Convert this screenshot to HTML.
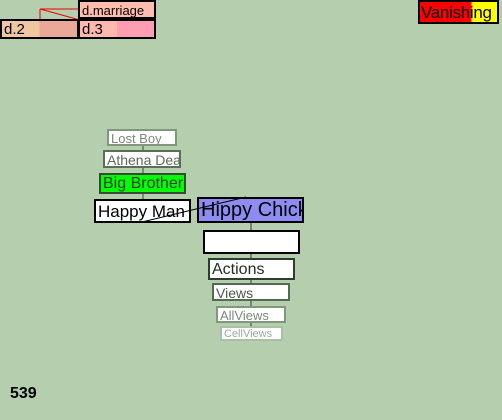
<!DOCTYPE html>
<html><head><style>
body{margin:0;width:502px;height:420px;background:#b5ceae;position:relative;overflow:hidden;font-family:"Liberation Sans",sans-serif;}
.b{position:absolute;box-sizing:border-box;background:#fff;white-space:nowrap;overflow:hidden;line-height:1;padding-left:2px;}
</style></head><body>
<svg width="502" height="420" style="position:absolute;left:0;top:0">
<line x1="143" y1="145" x2="143" y2="200" stroke="#3a4a38" stroke-width="1"/>
<line x1="251" y1="222" x2="251" y2="340" stroke="#333" stroke-width="1"/>
<line x1="40" y1="9" x2="40" y2="20" stroke="#e00" stroke-width="1"/>
<line x1="40" y1="9" x2="78" y2="9" stroke="#e00" stroke-width="1"/>
<line x1="40" y1="9" x2="80" y2="20" stroke="#e00" stroke-width="1"/>
</svg>
<div class="b" style="left:78px;top:0;width:78px;height:19px;border:2px solid #000;background:#ffbdae;font-size:13px;padding-top:2px">d.marriage</div>
<div class="b" style="left:0;top:19px;width:79px;height:20px;border:2px solid #000;background:linear-gradient(90deg,#efc8a2 50%,#eaa898 50%);font-size:15px;padding-top:1px">d.2</div>
<div class="b" style="left:78px;top:19px;width:78px;height:20px;border:2px solid #000;background:linear-gradient(90deg,#ffb8ae 50%,#ff9eb2 50%);font-size:15px;padding-top:1px">d.3</div>
<div class="b" style="left:418px;top:0;width:81px;height:24px;border:2px solid #000;background:linear-gradient(90deg,#f00 67%,#ff0 67%);font-size:17px;padding-top:2px;padding-left:1px;letter-spacing:-0.3px">Vanishing</div>
<div class="b" style="left:107px;top:129px;width:70px;height:17px;border:2px solid #7f977a;color:#7a8a78;font-size:13px;padding-top:1px">Lost Boy</div>
<div class="b" style="left:103px;top:150px;width:78px;height:18px;border:2px solid #5a6e58;color:#5a6a58;font-size:14px;padding-top:1px">Athena Dea</div>
<div class="b" style="left:99px;top:173px;width:87px;height:21px;border:2px solid #3a4a38;background:#00ff00;color:#1e3a1c;font-size:16px;padding-top:1px">Big Brother</div>
<div class="b" style="left:94px;top:199px;width:97px;height:24px;border:2px solid #000;font-size:17px;padding-top:2px">Happy Man</div>
<div class="b" style="left:197px;top:197px;width:107px;height:26px;border:2px solid #000;background:#8c8cf2;font-size:20px;padding-top:1px">Hippy Chick</div>
<svg width="502" height="420" style="position:absolute;left:0;top:0"><line x1="142" y1="222" x2="246" y2="197" stroke="#000" stroke-width="1"/></svg>
<div class="b" style="left:203px;top:230px;width:97px;height:24px;border:2px solid #000"></div>
<div class="b" style="left:208px;top:258px;width:87px;height:22px;border:2px solid #2e3e2c;color:#1e2e1c;font-size:16px;padding-top:2px">Actions</div>
<div class="b" style="left:212px;top:283px;width:78px;height:18px;border:2px solid #556a52;color:#4a5a48;font-size:14px;padding-top:1px">Views</div>
<div class="b" style="left:216px;top:306px;width:70px;height:17px;border:2px solid #80987c;color:#7a8a78;font-size:13px;padding-top:1px">AllViews</div>
<div class="b" style="left:220px;top:326px;width:63px;height:15px;border:2px solid #a8c0a4;color:#9aaa98;font-size:11px;padding-top:1px">CellViews</div>
<div style="position:absolute;left:10px;top:385px;font-size:16px;font-weight:bold">539</div>
</body></html>
